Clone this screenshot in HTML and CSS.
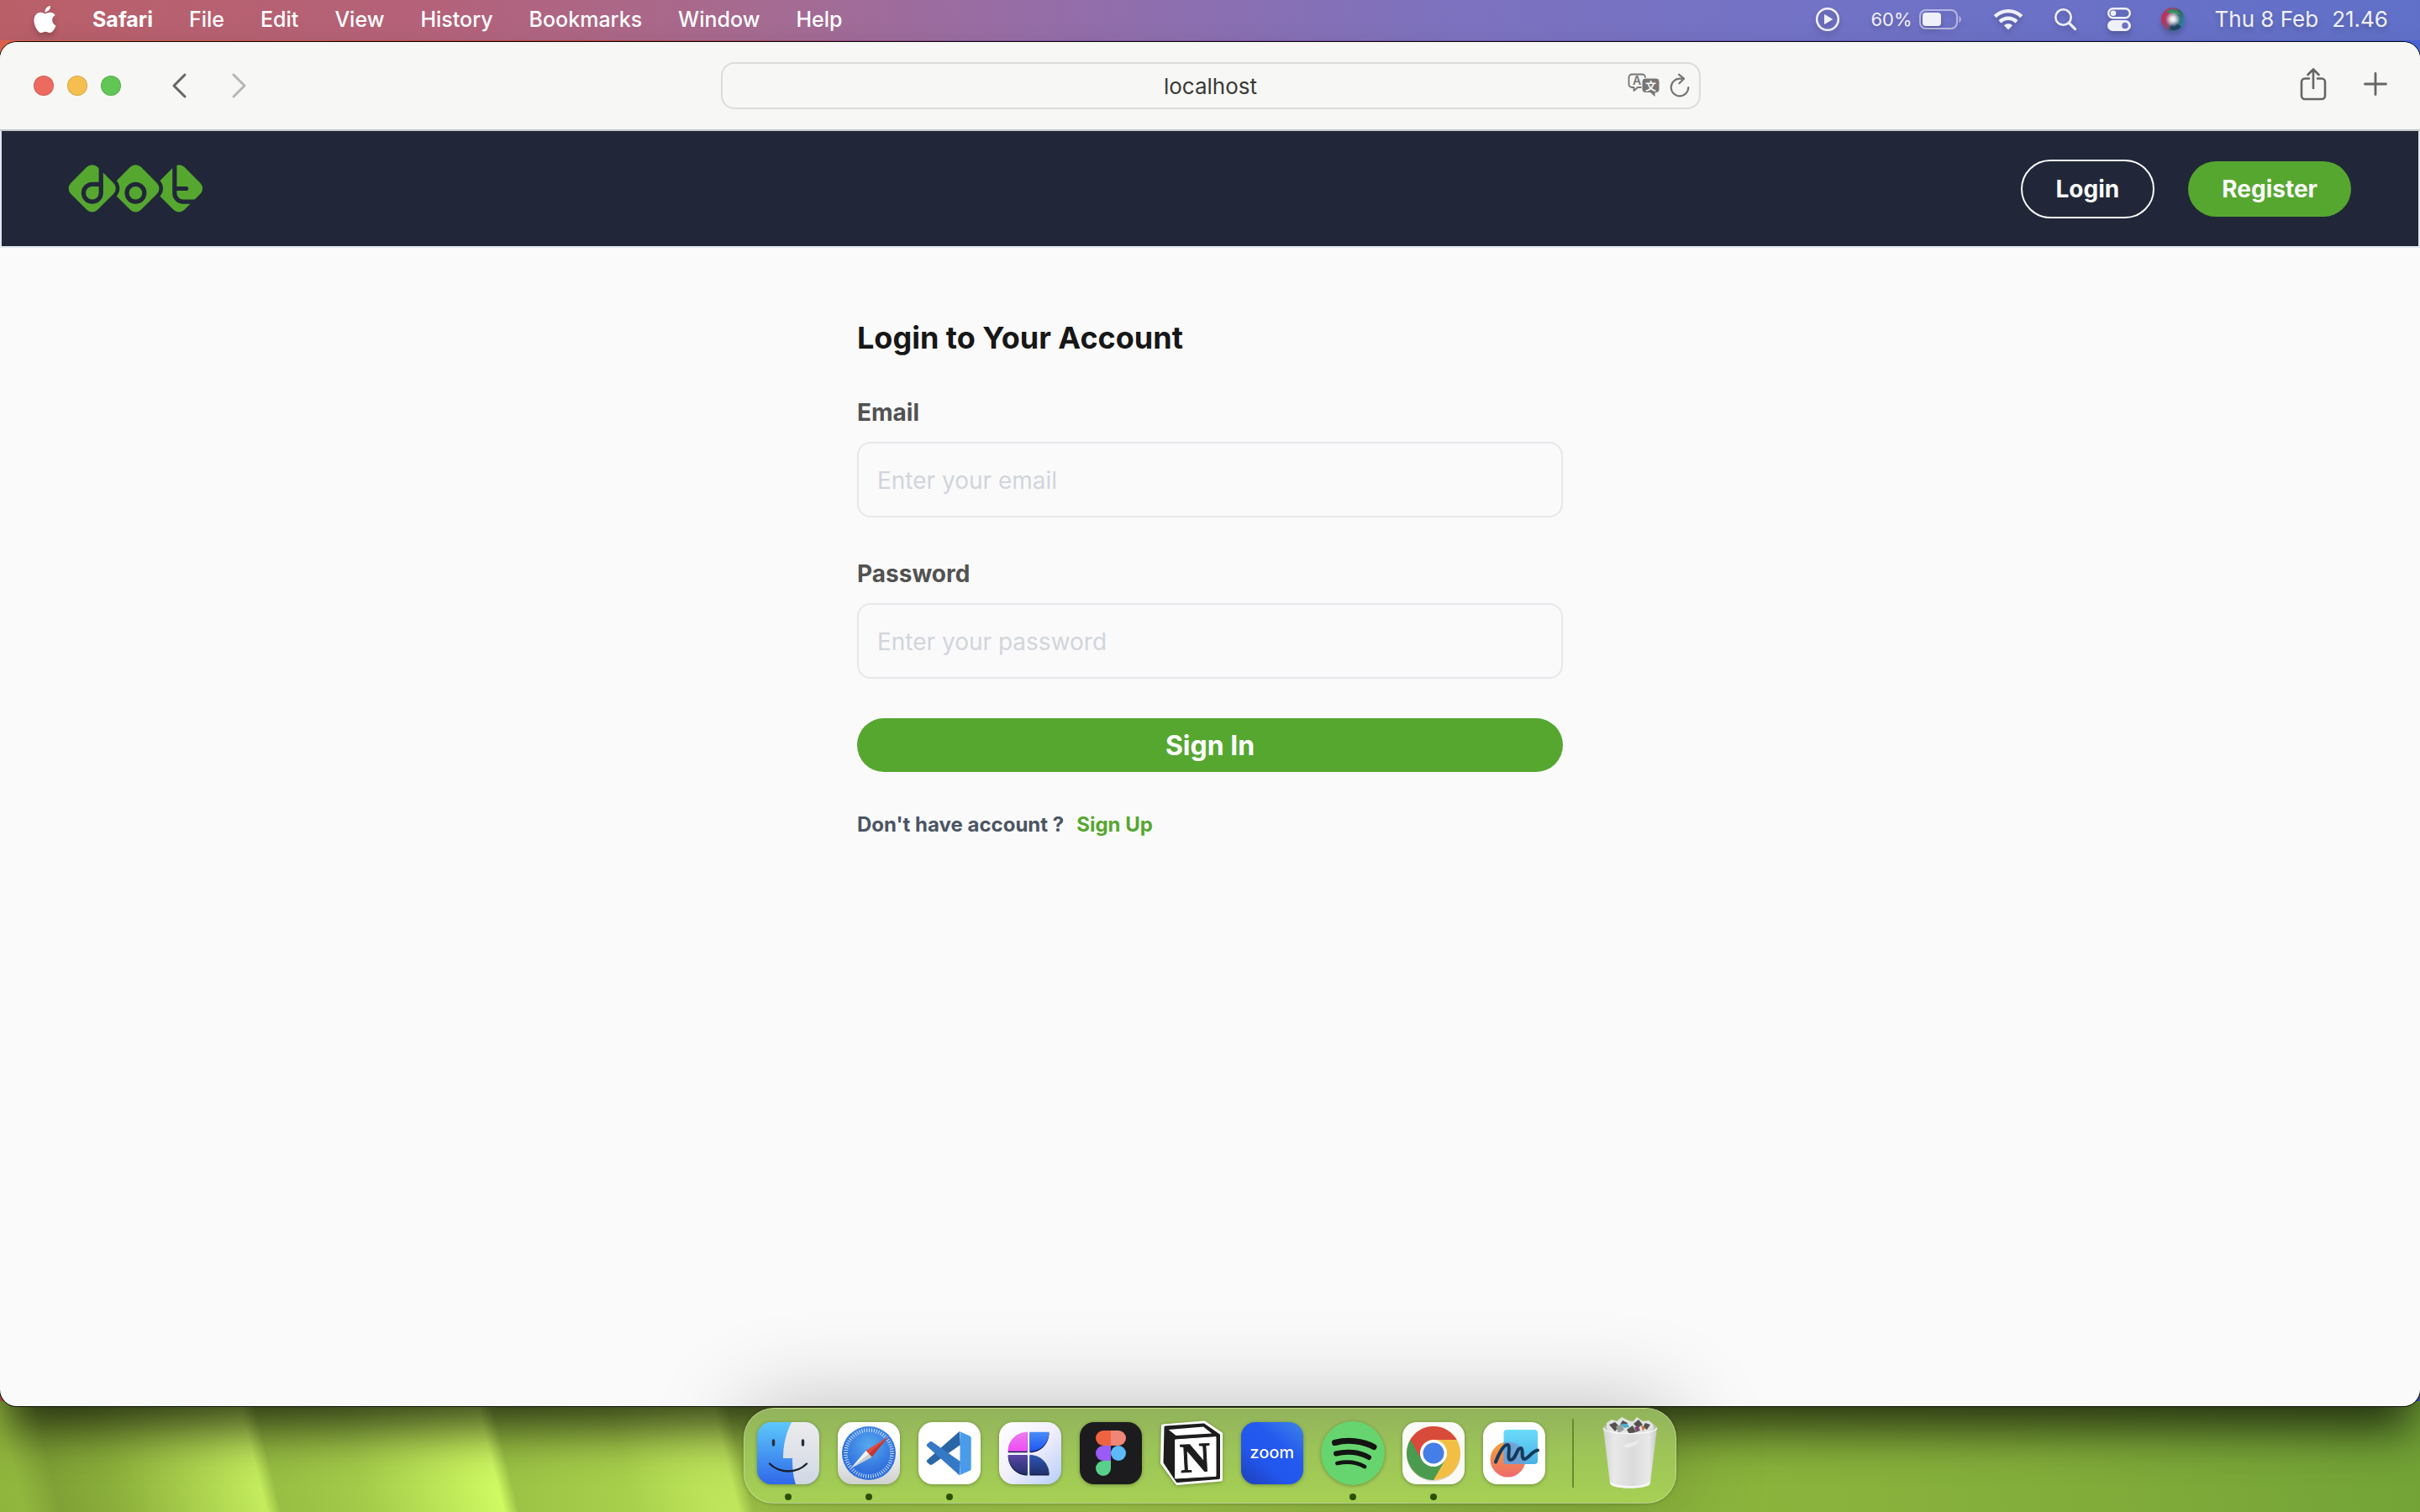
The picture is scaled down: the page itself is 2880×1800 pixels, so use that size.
FILE: index.html
```html
<!DOCTYPE html>
<html lang="en">
<head>
<meta charset="utf-8">
<meta name="viewport" content="width=device-width, initial-scale=1">
<title>Login</title>
<link rel="stylesheet" href="styles.css">
</head>
<body class="desktop">

<header class="menubar">
  <nav class="menus" aria-label="Menu bar">
    <button class="menu menu-apple" aria-label="Apple">
      <svg width="27" height="32" viewBox="2 0 20 24" fill="currentColor"><path d="M12.152 6.896c-.948 0-2.415-1.078-3.96-1.04-2.04.027-3.91 1.183-4.961 3.014-2.117 3.675-.546 9.103 1.519 12.09 1.013 1.454 2.208 3.09 3.792 3.039 1.52-.065 2.09-.987 3.935-.987 1.831 0 2.35.987 3.96.948 1.637-.026 2.676-1.48 3.676-2.948 1.156-1.688 1.636-3.325 1.662-3.415-.039-.013-3.182-1.221-3.22-4.857-.026-3.04 2.48-4.494 2.597-4.559-1.429-2.09-3.623-2.324-4.39-2.376-2-.156-3.675 1.09-4.61 1.09zM15.53 3.83c.843-1.012 1.4-2.427 1.245-3.83-1.207.052-2.662.805-3.532 1.818-.78.896-1.454 2.338-1.273 3.714 1.338.104 2.715-.688 3.559-1.701"/></svg>
    </button>
    <button class="menu menu-app">Safari</button>
    <button class="menu">File</button>
    <button class="menu">Edit</button>
    <button class="menu">View</button>
    <button class="menu">History</button>
    <button class="menu">Bookmarks</button>
    <button class="menu">Window</button>
    <button class="menu">Help</button>
  </nav>
  <div class="status">
    <svg width="30" height="30" viewBox="0 0 30 30" fill="none"><circle cx="15" cy="15" r="12.8" stroke="currentColor" stroke-width="2.6"/><path d="M11.5 9.6v10.8l9-5.4z" fill="currentColor" stroke="currentColor" stroke-linejoin="round"/></svg>
    <div class="battery">
      <span>60%</span>
      <svg width="52" height="24" viewBox="0 0 52 24"><rect x="1" y="1" width="44" height="22" rx="7" fill="none" stroke="#fff" stroke-opacity=".5" stroke-width="2"/><rect x="4" y="4" width="22" height="16" rx="4" fill="currentColor"/><path d="M47.500 8c3 1 3 7 0 8z" fill="#fff" fill-opacity=".5"/></svg>
    </div>
    <svg width="36" height="26" viewBox="0 0 36 26" fill="none" stroke="currentColor" stroke-width="4.400"><path d="M2.200 9.600c9-8.600 22.600-8.600 31.600 0"/><path d="M8 15.800c6-5.400 14-5.400 20 0"/><path d="M18 25.500l-5-5.200c3-2.600 7-2.600 10 0z" fill="currentColor" stroke="none"/></svg>
    <svg width="28" height="28" viewBox="0 0 28 28" fill="none" stroke="currentColor" stroke-linecap="round"><circle cx="11.500" cy="11.500" r="9.200" stroke-width="2.600"/><path d="M18.600 18.600l7 7" stroke-width="3.200"/></svg>
    <svg width="28" height="28" viewBox="0 0 28 28"><rect x="1.200" y="1.200" width="25.600" height="11" rx="5.500" fill="none" stroke="currentColor" stroke-width="2.400"/><circle cx="7" cy="6.700" r="3.300" fill="currentColor"/><rect y="15" width="28" height="13" rx="6.500" fill="currentColor"/><circle cx="21" cy="21.500" r="3.800" fill="#6b72c6"/></svg>
    <svg width="28" height="28" viewBox="0 0 28 28">
      <defs>
        <linearGradient id="siri" x1="0" y1=".3" x2="1" y2=".7"><stop offset="0" stop-color="#d3264c"/><stop offset=".4" stop-color="#8c4a76"/><stop offset=".62" stop-color="#33606f"/><stop offset="1" stop-color="#2f86a8"/></linearGradient>
        <radialGradient id="siri-glow"><stop offset="0" stop-color="#fff"/><stop offset=".35" stop-color="#fff" stop-opacity=".8"/><stop offset="1" stop-color="#fff" stop-opacity="0"/></radialGradient>
      </defs>
      <circle cx="14" cy="14" r="14" fill="url(#siri)"/>
      <path d="M6 5c6-5 14-3 18 4-6-2-12-1-18-4z" fill="#2f8f5d"/>
      <path d="M14 15l10 8c-4 5-11 5-14 2z" fill="#1f4566"/>
      <circle cx="14" cy="14" r="9" fill="url(#siri-glow)"/>
    </svg>
    <div class="clock"><span>Thu 8 Feb</span><span>21.46</span></div>
  </div>
</header>

<div class="window">
  <div class="toolbar">
    <div class="toolbar-side">
      <div class="lights">
        <button class="light light-close" aria-label="Close"></button>
        <button class="light light-min" aria-label="Minimise"></button>
        <button class="light light-max" aria-label="Zoom"></button>
      </div>
      <div class="history">
        <button class="tool" aria-label="Back"><svg width="20" height="32" viewBox="0 0 20 32" fill="none" stroke="#666664" stroke-width="3" stroke-linecap="round" stroke-linejoin="round"><path d="M16 3L3 16l13 13"/></svg></button>
        <button class="tool" aria-label="Forward"><svg width="20" height="32" viewBox="0 0 20 32" fill="none" stroke="#b6b6b4" stroke-width="3" stroke-linecap="round" stroke-linejoin="round"><path d="M4 3l13 13L4 29"/></svg></button>
      </div>
    </div>
    <div class="address">
      <input class="address-input" type="text" value="localhost" aria-label="Address">
      <div class="address-tools">
        <button class="tool" aria-label="Translate">
          <svg width="38" height="30" viewBox="0 0 38 30"><path d="M5 1.500h12.500a3.500 3.500 0 0 1 3.500 3.500v8.500a3.500 3.500 0 0 1-3.500 3.500H12l-4.500 4v-4H5a3.500 3.500 0 0 1-3.500-3.500V5A3.500 3.500 0 0 1 5 1.500z" fill="none" stroke="#767674" stroke-width="1.800" stroke-linejoin="round"/><text x="11" y="14" class="glyph-latin" text-anchor="middle">A</text><path d="M21 6h13a4 4 0 0 1 4 4v9.500a4 4 0 0 1-4 4h-1V29l-6-5.500h-6a4 4 0 0 1-4-4V10a4 4 0 0 1 4-4z" fill="#767674" stroke="#f7f7f5" stroke-width="1"/><text x="27.500" y="19.500" class="glyph-han" text-anchor="middle">文</text></svg>
        </button>
        <button class="tool" aria-label="Reload">
          <svg width="24" height="30" viewBox="0 0 24 30" fill="none" stroke="#767674" stroke-width="2.200" stroke-linecap="round" stroke-linejoin="round"><path d="M22.300 17a10.300 10.300 0 1 1-10.300-10.300h4.500"/><path d="M11 1.600l6 5.100-5.600 5.600"/></svg>
        </button>
      </div>
    </div>
    <div class="toolbar-side toolbar-end">
      <button class="tool" aria-label="Share"><svg width="32" height="44" viewBox="0 0 32 44" fill="none" stroke="#666664" stroke-width="2.600" stroke-linecap="round" stroke-linejoin="round"><path d="M11 13.500H6a4 4 0 0 0-4 4V34a4 4 0 0 0 4 4h20a4 4 0 0 0 4-4V17.500a4 4 0 0 0-4-4h-5M16 25V2.500M9.500 9L16 2.500 22.500 9"/></svg></button>
      <button class="tool" aria-label="New tab"><svg width="28" height="32" viewBox="0 0 28 32" fill="none" stroke="#666664" stroke-width="2.800" stroke-linecap="round"><path d="M14 1.500v25M1.500 14h25"/></svg></button>
    </div>
  </div>

  <div class="page">
    <header class="site-header">
      <a class="logo" href="#" aria-label="dot">
        <svg width="160" height="58" viewBox="0 0 160 58" fill="#56a730">
          <rect x="108.500" y="5.800" width="45" height="45" rx="9" transform="rotate(45 131 28.300)"/>
          <path d="M125.800-2v36a10.200 10.200 0 0 0 10.200 10.200H160M126 28.500h13.600" fill="none" stroke="#212738" stroke-width="5.200" stroke-linecap="round"/>
          <rect x="56.900" y="5.800" width="45" height="45" rx="9" transform="rotate(45 79.400 28.300)" stroke="#212738" stroke-width="9" paint-order="stroke"/>
          <circle cx="79.400" cy="33.700" r="10.400" fill="none" stroke="#212738" stroke-width="5.200"/>
          <rect x="5.200" y="5.800" width="45" height="45" rx="9" transform="rotate(45 27.700 28.300)" stroke="#212738" stroke-width="9" paint-order="stroke"/>
          <path d="M38.200-2V33.700a10.400 10.400 0 1 1-10.400-10.400H38" fill="none" stroke="#212738" stroke-width="5.200"/>
        </svg>
      </a>
      <nav class="site-actions">
        <button class="pill pill-outline">Login</button>
        <button class="pill pill-solid">Register</button>
      </nav>
    </header>

    <main class="content">
      <form class="login-form">
        <h1 class="title">Login to Your Account</h1>
        <div class="field">
          <label class="label" for="email">Email</label>
          <input class="input" id="email" type="email" placeholder="Enter your email">
        </div>
        <div class="field">
          <label class="label" for="password">Password</label>
          <input class="input" id="password" type="password" placeholder="Enter your password">
        </div>
        <button class="submit" type="submit">Sign In</button>
        <p class="signup">Don't have account ? <a class="signup-link" href="#">Sign Up</a></p>
      </form>
    </main>
  </div>
</div>

<nav class="dock" aria-label="Dock">
  <button class="app running" aria-label="Finder">
    <svg class="icon" viewBox="0 0 74 74">
      <defs>
        <linearGradient id="finder-l" x2="0" y2="1"><stop offset="0" stop-color="#5cc8fa"/><stop offset="1" stop-color="#3068ea"/></linearGradient>
        <linearGradient id="finder-r" x2="0" y2="1"><stop offset="0" stop-color="#ececee"/><stop offset="1" stop-color="#d0d7e4"/></linearGradient>
        <clipPath id="tile"><rect width="74" height="74" rx="17"/></clipPath>
      </defs>
      <g clip-path="url(#tile)"><rect width="74" height="74" fill="url(#finder-l)"/><path d="M41 0C34 14 31 28 31 43h11c0 12 1 22 4 31h28V0z" fill="url(#finder-r)"/></g>
      <path d="M19.500 22v5M54.500 22v5" stroke="#26303c" stroke-width="3.400" stroke-linecap="round"/>
      <path d="M15 49.500c12 12 32 12 44 0" fill="none" stroke="#16202e" stroke-width="2.400" stroke-linecap="round"/>
    </svg>
  </button>
  <button class="app running" aria-label="Safari">
    <svg class="icon" viewBox="0 0 74 74">
      <defs>
        <linearGradient id="saf-t" x2="0" y2="1"><stop offset=".3" stop-color="#fff"/><stop offset="1" stop-color="#cfd0d0"/></linearGradient>
        <radialGradient id="saf-d" cy=".35"><stop offset="0" stop-color="#56aaf0"/><stop offset="1" stop-color="#3170dc"/></radialGradient>
      </defs>
      <rect width="74" height="74" rx="17" fill="url(#saf-t)"/>
      <circle cx="37" cy="37" r="32" fill="url(#saf-d)"/>
      <circle cx="37" cy="37" r="27.500" fill="none" stroke="#d8ebfb" stroke-width="4.500" stroke-dasharray=".9 1.979"/>
      <path d="M60 17.500L40.500 41.500 33.500 34z" fill="#e2493c"/><path d="M33.500 34l7 7.500L15.500 55z" fill="#f4f4f4"/><path d="M60 17.500L40.500 41.500 37 37.700z" fill="#b93a33"/><path d="M15.500 55l21.500-17.300 3.500 3.800z" fill="#c9cdd2"/>
    </svg>
  </button>
  <button class="app running" aria-label="Visual Studio Code">
    <svg class="icon" viewBox="0 0 74 74">
      <rect width="74" height="74" rx="17" fill="#fff"/>
      <path d="M48.800 11L10.500 45c-1 1-.8 2 0 3l3 2.600c1 .7 2 .6 3 0L50 27z" fill="#2a65a6"/>
      <path d="M48.800 63.300L10.500 29c-1-1-.8-2 0-3l3-2.600c1-.7 2-.6 3 0L50 47z" fill="#3478c6"/>
      <path d="M48.800 11l12.400 5.600c1 .5 1.500 1.300 1.500 2.400v36.500c0 1-.5 1.900-1.500 2.300l-12.400 5.500c-1 .3 .7 0 .7-2V13c0-2-1.700-2.300-.7-2z" fill="#4a9bea"/>
    </svg>
  </button>
  <button class="app" aria-label="Craft">
    <svg class="icon" viewBox="0 0 74 74">
      <defs>
        <linearGradient id="cr-bg" x2="1" y2="1"><stop offset="0" stop-color="#fff"/><stop offset=".5" stop-color="#f2effc"/><stop offset="1" stop-color="#b4cdfb"/></linearGradient>
        <linearGradient id="cr-a" x2="0" y2="1"><stop offset="0" stop-color="#ee7cf0"/><stop offset="1" stop-color="#ee4cf2"/></linearGradient>
        <linearGradient id="cr-b" x2="0" y2="1"><stop offset="0" stop-color="#4a8cf6"/><stop offset="1" stop-color="#1e55f4"/></linearGradient>
        <linearGradient id="cr-c" x2="0" y2="1"><stop offset="0" stop-color="#5c46a4"/><stop offset="1" stop-color="#22306e"/></linearGradient>
        <linearGradient id="cr-d" x2="0" y2="1"><stop offset="0" stop-color="#2e58b4"/><stop offset="1" stop-color="#20306e"/></linearGradient>
      </defs>
      <rect width="74" height="74" rx="17" fill="url(#cr-bg)"/>
      <g fill="#141c48" transform="translate(0 1)"><path d="M33.700 11.700v23.600h-23c0-13 10-23.600 23-23.600z"/><path d="M36.500 11.700h23c0 13-10 23.600-23 23.600z"/><path d="M10.700 39h23v23.500c-13 0-23-10-23-23.500z"/><path d="M36.500 39c13 0 23 10 23 23.500h-23z"/></g>
      <path d="M33.700 11.700v23h-23c0-13 10-23 23-23z" fill="url(#cr-a)"/><path d="M36.500 11.700h23c0 13-10 23-23 23z" fill="url(#cr-b)"/><path d="M10.700 39h23v23c-13 0-23-10-23-23z" fill="url(#cr-c)"/><path d="M36.500 39c13 0 23 10 23 23h-23z" fill="url(#cr-d)"/>
    </svg>
  </button>
  <button class="app" aria-label="Figma">
    <svg class="icon" viewBox="0 0 74 74">
      <rect width="74" height="74" rx="17" fill="#1c1c1e"/>
      <path d="M37 10v18h-9a9 9 0 0 1 0-18z" fill="#ee6440"/><path d="M37 10h9a9 9 0 0 1 0 18h-9z" fill="#f08678"/>
      <path d="M37 28v18h-9a9 9 0 0 1 0-18z" fill="#9a5cf4"/><circle cx="46" cy="37" r="9" fill="#5cbaf8"/>
      <path d="M28 46h9v9a9 9 0 1 1-9-9z" fill="#58d08c"/>
    </svg>
  </button>
  <button class="app" aria-label="Notion">
    <svg class="icon" viewBox="0 0 74 74">
      <path d="M3 4.500L52 .5 72 14v54.500L20 73 2 48.500z" fill="#fff" stroke="#fff" stroke-width="4" stroke-linejoin="round"/>
      <path d="M6 6L51.500 3 69.500 15.500v51L20 70.500 5 48z" fill="#1c1c1c" stroke="#1c1c1c" stroke-width="3" stroke-linejoin="round"/>
      <path d="M9.700 9l41.500-3.500 10 8L18.500 16z" fill="#fff"/>
      <path d="M17.700 21L66 17.700v46.600L17.700 67z" fill="#fff" stroke="#fff" stroke-linejoin="round"/>
      <text x="41.500" y="59" text-anchor="middle" class="notion-letter" transform="rotate(-3 41.500 42)">N</text>
    </svg>
  </button>
  <button class="app" aria-label="Zoom">
    <svg class="icon" viewBox="0 0 74 74">
      <defs><linearGradient id="zm" x1="1" x2=".2" y2="1"><stop offset="0" stop-color="#3f84e8"/><stop offset=".4" stop-color="#2459ee"/><stop offset=".7" stop-color="#2257ee"/><stop offset="1" stop-color="#1f45c4"/></linearGradient></defs>
      <rect width="74" height="74" rx="17" fill="url(#zm)"/>
      <text x="37" y="42.500" text-anchor="middle" class="zoom-word">zoom</text>
    </svg>
  </button>
  <button class="app running" aria-label="Spotify">
    <svg class="icon" viewBox="0 0 74 74">
      <circle cx="37" cy="37" r="38" fill="#67d56f"/>
      <g fill="none" stroke="#121512" stroke-linecap="round"><path d="M15.500 24.500c15-4 33-2.500 46.500 5" stroke-width="7"/><path d="M17 37.500c13-3.500 28-2 39 4.500" stroke-width="6"/><path d="M18.500 49c11-2.500 23-1.500 32.500 4" stroke-width="4.800"/></g>
    </svg>
  </button>
  <button class="app running" aria-label="Chrome">
    <svg class="icon" viewBox="0 0 74 74">
      <rect width="74" height="74" rx="17" fill="#fafaf6"/>
      <circle cx="37" cy="38.500" r="32" fill="#000" opacity=".12"/>
      <circle cx="37" cy="37" r="32" fill="#f3be44"/>
      <path d="M9.300 21A32 32 0 0 0 37 69L50.900 45 37 37z" fill="#4a9a50"/>
      <path d="M9.300 21A32 32 0 0 1 64.700 21H37L23.100 45z" fill="#d84a3a"/>
      <circle cx="37" cy="37" r="16" fill="#fff"/><circle cx="37" cy="37" r="12.500" fill="#447ee6"/>
    </svg>
  </button>
  <button class="app" aria-label="Freeform">
    <svg class="icon" viewBox="0 0 74 74">
      <defs>
        <linearGradient id="ff-o" x2="0" y2="1"><stop offset="0" stop-color="#f4a238"/><stop offset="1" stop-color="#ee6a6c"/></linearGradient>
        <linearGradient id="ff-b" x2="0" y2="1"><stop offset="0" stop-color="#6adcfb"/><stop offset="1" stop-color="#4cb0e4"/></linearGradient>
      </defs>
      <rect width="74" height="74" rx="17" fill="#fff"/>
      <circle cx="29.500" cy="44.500" r="21" fill="url(#ff-o)"/>
      <rect x="24.500" y="9" width="40.500" height="41" rx="4" fill="url(#ff-b)"/>
      <path d="M24.500 24a21 21 0 0 1 25.300 26H28.500a4 4 0 0 1-4-4z" fill="#7698cc" opacity=".75"/>
      <path d="M15 47.500c4-11 10-21 14-20.500 5 1-2 18 4 18 6 0 7-15 12-14 4 1-1 12 4 13 5 0 8-9 16-10.500" fill="none" stroke="#143a5c" stroke-width="4" stroke-linecap="round" stroke-linejoin="round"/>
    </svg>
  </button>
  <span class="dock-rule"></span>
  <button class="app app-trash" aria-label="Bin">
    <svg width="66" height="88" viewBox="0 0 66 88">
      <defs><linearGradient id="bin"><stop offset="0" stop-color="#d0d2d0"/><stop offset=".2" stop-color="#e8e9e8"/><stop offset=".55" stop-color="#dadbda"/><stop offset=".85" stop-color="#e9e9e9"/><stop offset="1" stop-color="#c4c8c4"/></linearGradient></defs>
      <ellipse cx="33" cy="14" rx="32" ry="8.500" fill="#b9c0b4"/>
      <path d="M5 8l6-4 6 2 6-5 8 4 5 2 5-6 7 5 7-1 5 4 1 6-9 6H14l-9-6z" fill="#e2e4e4"/>
      <path d="M8 10l7-3 5 5-5 6zM24 5l6 3-3 5-6-3zM37 9l6-5 5 6-6 4zM51 8l6 2-4 6-5-3zM29 16l7-5 4 8-8 2z" fill="#55504e"/>
      <path d="M16 12l7-2 3 6-7 4z" fill="#9aa09e"/><path d="M22 9l8 0 2 4-6 1z" fill="#4bb0d0"/><path d="M38 13l5-1 2 5-5 2z" fill="#7a4a6e"/><path d="M46 11l5 2-3 5z" fill="#c8743c"/>
      <path d="M1 14c4 9 60 9 64 0l-8 65c-1 9-47 9-48 0z" fill="url(#bin)"/>
      <path d="M1 14c4 9 60 9 64 0" fill="none" stroke="#f8f8f8" stroke-width="1.500"/>
      <path d="M24 36c8 3 16 0 20-8-4 3-13 3-20 8z" fill="#f2f2f2" opacity=".7"/>
      <path d="M9 77c6 8 42 8 48 0l-.5 4c-4 6-43 6-47 0z" fill="#fafafa" opacity=".9"/>
    </svg>
  </button>
</nav>

</body>
</html>
```
FILE: styles.css
```css
* {
  box-sizing: border-box;
}

body {
  margin: 0;
  font-family: "Inter", "Liberation Sans", sans-serif;
}

button {
  margin: 0;
  padding: 0;
  border: 0;
  background: none;
  color: inherit;
  font: inherit;
}

svg {
  display: block;
  overflow: visible;
}

.desktop {
  display: flex;
  flex-direction: column;
  min-height: 100vh;
  overflow: hidden;
  background:
    linear-gradient(76deg,
      #8fb53d 0%, #92b73e 1%, #7fa136 2.500%, #8cb03b 5%, #c4ec5d 10.900%,
      #98be43 11.500%, #a4cb4a 15%, #d0fa62 20.600%,
      #9cc345 21.200%, #a9d04c 26%, #caf262 30.200%,
      #a2c849 30.800%, #a6ce4c 45%, #94bc42 60%, #8ab43c 72%, #84ae3b 83%, #72a236 100%)
      bottom / 100% 132px no-repeat,
    linear-gradient(90deg, #e0624c 0, #c0403a 24%, #8a4f9a 40%, #4a62d8 100%);
}

/* Menu bar */

.menubar {
  display: flex;
  align-items: center;
  justify-content: space-between;
  height: 48px;
  padding: 0 38px 2px 40px;
  background: linear-gradient(90deg, #b95f68 0%, #b4627a 18%, #a56b92 32%, #976da6 42%, #7d72bf 60%, #7272c6 75%, #6070c8 100%);
  color: #fff;
  font-size: 26px;
  line-height: 32px;
}

.menus,
.status {
  display: flex;
  align-items: center;
}

.menus {
  gap: 43px;
  font-size: 25px;
  text-shadow: 0 4px 6px rgba(0, 0, 0, .25);
}

.menu {
  font-weight: 500;
}

.menu-app {
  font-weight: 700;
}

.menu svg,
.status svg {
  filter: drop-shadow(0 4px 3px rgba(0, 0, 0, .2));
}

.status {
  gap: 36px;
  color: #f0f0fa;
  text-shadow: 0 4px 6px rgba(0, 0, 0, .2);
}

.battery {
  display: flex;
  align-items: center;
  gap: 8px;
  font-size: 22px;
}

.clock {
  display: flex;
  gap: 16px;
}

/* Browser window */

.window {
  flex: 1;
  display: flex;
  flex-direction: column;
  margin-top: 2px;
  border-radius: 20px;
  background: #fafafa;
  box-shadow: 0 0 0 1px #0a0c08, 0 36px 56px -8px rgba(0, 0, 0, .72);
}

.toolbar {
  display: grid;
  grid-template-columns: 1fr minmax(400px, 1166px) 1fr;
  align-items: center;
  height: 106px;
  padding: 0 39px 0 40px;
  border-bottom: 2px solid #c4c6ca;
  border-radius: 20px 20px 0 0;
  background: #f7f7f5;
}

.toolbar-side {
  display: flex;
  align-items: center;
  gap: 60px;
}

.toolbar-end {
  justify-content: flex-end;
  gap: 44px;
}

.lights {
  display: flex;
  gap: 16px;
}

.light {
  width: 24px;
  height: 24px;
  border: 1px solid rgba(0, 0, 0, .12);
  border-radius: 50%;
}

.light-close {
  background: #ed6a5f;
}

.light-min {
  background: #f5bf4f;
}

.light-max {
  background: #61c654;
}

.history {
  display: flex;
  gap: 50px;
}

.address {
  display: grid;
}

.address-input,
.address-tools {
  grid-area: 1 / 1;
}

.address-input {
  width: 100%;
  height: 56px;
  padding: 0 100px;
  border: 2px solid #dcdcda;
  border-radius: 16px;
  background: transparent;
  color: #3a3a39;
  font: inherit;
  font-size: 26px;
  text-align: center;
}

.address-tools {
  display: flex;
  align-items: center;
  justify-self: end;
  gap: 12px;
  padding-right: 13px;
}

.glyph-latin {
  fill: #767674;
  font: 600 14px "Inter", sans-serif;
}

.glyph-han {
  fill: #f7f7f5;
  font: 700 13px "Noto Sans CJK SC", sans-serif;
}

/* Web page */

.page {
  flex: 1;
}

.site-header {
  display: flex;
  align-items: center;
  justify-content: space-between;
  height: 139px;
  padding: 0 80px;
  border: 2px solid #e2e8f0;
  border-top: 0;
  background: #212738;
}

.site-actions {
  display: flex;
  align-items: center;
  gap: 40px;
}

.pill {
  padding: 13px 40px;
  border-radius: 35px;
  color: #fafafa;
  font-size: 28px;
  font-weight: 700;
  line-height: 40px;
}

.pill-outline {
  border: 2px solid #fafafa;
}

.pill-solid {
  background: #56a730;
}

.content {
  padding: 79px 40px;
}

.login-form {
  display: flex;
  flex-direction: column;
  gap: 47px;
  max-width: 840px;
  margin: 0 auto;
}

.title {
  margin: 0 0 -6px;
  color: #171717;
  font-size: 36px;
  font-weight: 700;
  line-height: 56px;
}

.field {
  display: flex;
  flex-direction: column;
  gap: 15px;
}

.label {
  color: #525252;
  font-size: 28px;
  font-weight: 700;
  line-height: 40px;
}

.input {
  width: 100%;
  height: 90px;
  padding: 2px 22px 0;
  border: 2px solid #e5e7eb;
  border-radius: 16px;
  background: transparent;
  color: #171717;
  font: inherit;
  font-size: 28px;
}

.input::placeholder {
  color: #d1d5db;
  opacity: 1;
}

.submit {
  height: 64px;
  border-radius: 32px;
  background: #56a730;
  color: #fff;
  font-size: 32px;
  font-weight: 700;
}

.signup {
  display: flex;
  gap: 15px;
  margin: 0;
  color: #4b5563;
  font-size: 24px;
  font-weight: 700;
  line-height: 32px;
}

.signup-link {
  color: #56a730;
  text-decoration: none;
}

/* Dock */

.dock {
  display: flex;
  align-items: center;
  align-self: center;
  gap: 22px;
  margin: 2px 0 10px;
  padding: 0 21px 6px 15px;
  height: 114px;
  border: 1px solid rgba(255, 255, 255, .3);
  border-radius: 36px;
  background: linear-gradient(180deg, #92b35c 0%, #9dc458 45%, #a6d054 100%);
  box-shadow: 0 0 110px rgba(0, 0, 0, .26), 0 0 4px rgba(0, 0, 0, .25);
}

.app {
  position: relative;
  flex: none;
}

.icon {
  width: 74px;
  height: 74px;
  filter: drop-shadow(0 1px 2px rgba(0, 0, 0, .3));
}

.running::after {
  content: "";
  position: absolute;
  left: 33px;
  bottom: -19px;
  width: 8px;
  height: 8px;
  border-radius: 50%;
  background: #2a5000;
}

.dock-rule {
  width: 2px;
  height: 82px;
  margin: 0 12px 0 10px;
  background: #658d2e;
}

.notion-letter {
  fill: #1c1c1c;
  stroke: #1c1c1c;
  font: 700 50px "Liberation Serif", serif;
}

.zoom-word {
  fill: #fff;
  font: 500 20px "Inter", sans-serif;
}
```
